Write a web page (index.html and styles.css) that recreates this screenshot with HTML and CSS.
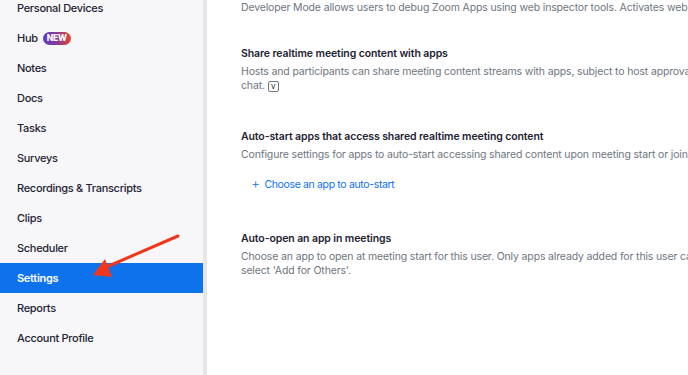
FILE: index.html
```html
<!DOCTYPE html>
<html lang="en">
<head>
    <meta charset="UTF-8">
    <title>Settings</title>
    <link rel="stylesheet" href="styles.css">
</head>
<body>
    <div class="sidebar">
        <ul class="nav">
            <li>Personal Devices</li>
            <li>Hub <span class="badge">NEW</span></li>
            <li>Notes</li>
            <li>Docs</li>
            <li>Tasks</li>
            <li>Surveys</li>
            <li>Recordings &amp; Transcripts</li>
            <li>Clips</li>
            <li>Scheduler</li>
            <li class="active">Settings</li>
            <li>Reports</li>
            <li>Account Profile</li>
        </ul>
    </div>
    <div class="main">
        <div class="setting first">
            <p class="desc">Developer Mode allows users to debug Zoom Apps using web inspector tools. Activates web inspector for apps in the client.</p>
        </div>
        <div class="setting">
            <div class="title">Share realtime meeting content with apps</div>
            <p class="desc">Hosts and participants can share meeting content streams with apps, subject to host approval and meeting settings in<br>chat. <span class="tag">v</span></p>
        </div>
        <div class="setting">
            <div class="title">Auto-start apps that access shared realtime meeting content</div>
            <p class="desc">Configure settings for apps to auto-start accessing shared content upon meeting start or join.</p>
            <a class="add-link" href="#"><span class="plus">+</span> Choose an app to auto-start</a>
        </div>
        <div class="setting">
            <div class="title">Auto-open an app in meetings</div>
            <p class="desc">Choose an app to open at meeting start for this user. Only apps already added for this user can be selected. To add apps,<br>select 'Add for Others'.</p>
        </div>
    </div>
    <!-- annotation arrow -->
    <svg class="arrow" width="688" height="375" viewBox="0 0 688 375">
        <line x1="178" y1="236" x2="104" y2="268" stroke="#f2361d" stroke-width="3" stroke-linecap="round"/>
        <polygon points="93,275 105,259 112,277" fill="#f2361d"/>
    </svg>
</body>
</html>
```
FILE: styles.css
```css
body {
    margin: 0;
    font-family: Inter, 'Liberation Sans', sans-serif;
    background-color: #ffffff;
    display: flex;
    height: 375px;
    overflow: hidden;
    position: relative;
}
.sidebar {
    width: 203px;
    flex-shrink: 0;
    background-color: #f7f7f9;
    border-right: 4px solid #e6e6e8;
}
.nav {
    list-style: none;
    margin: -7px 0 0 0;
    padding: 0;
}
.nav li {
    height: 30px;
    display: flex;
    align-items: center;
    padding-left: 17px;
    font-size: 11px;
    font-weight: 500;
    letter-spacing: -0.3px;
    color: #232333;
}
.nav li.active {
    background-color: #0e72ed;
    color: #ffffff;
    font-weight: 600;
}
.badge {
    margin-left: 5px;
    padding: 0 4px;
    height: 13px;
    line-height: 13px;
    border-radius: 7px;
    font-size: 8.5px;
    font-weight: 800;
    letter-spacing: -0.2px;
    color: #ffffff;
    background: linear-gradient(90deg, #5b3bc4, #8a3a9a, #e4452a);
}
.main {
    padding-left: 34px;
    flex: 1;
    overflow: hidden;
}
.setting {
    margin-bottom: 36px;
}
.setting.first {
    margin-top: 1px;
    margin-bottom: 31px;
}
.title {
    font-size: 10.5px;
    font-weight: 600;
    letter-spacing: -0.1px;
    color: #232333;
    line-height: 15px;
    margin-bottom: 4px;
    white-space: nowrap;
}
.desc {
    margin: 0;
    font-size: 10.5px;
    letter-spacing: -0.15px;
    line-height: 14px;
    color: #6e7680;
    white-space: nowrap;
}
.tag {
    display: inline-block;
    font-size: 8px;
    line-height: 9px;
    width: 9px;
    letter-spacing: 0;
    text-align: center;
    border: 1px solid #6e7680;
    border-radius: 2px;
    color: #232333;
}
.add-link {
    display: inline-block;
    margin-top: 14px;
    margin-bottom: 4px;
    margin-left: 10px;
    font-size: 10.5px;
    line-height: 13px;
    letter-spacing: -0.35px;
    color: #0e72ed;
    text-decoration: none;
}
.plus {
    font-weight: 300;
    font-size: 14px;
    line-height: 13px;
    margin-right: 2px;
}
.arrow {
    position: absolute;
    left: 0;
    top: 0;
    pointer-events: none;
}
```
